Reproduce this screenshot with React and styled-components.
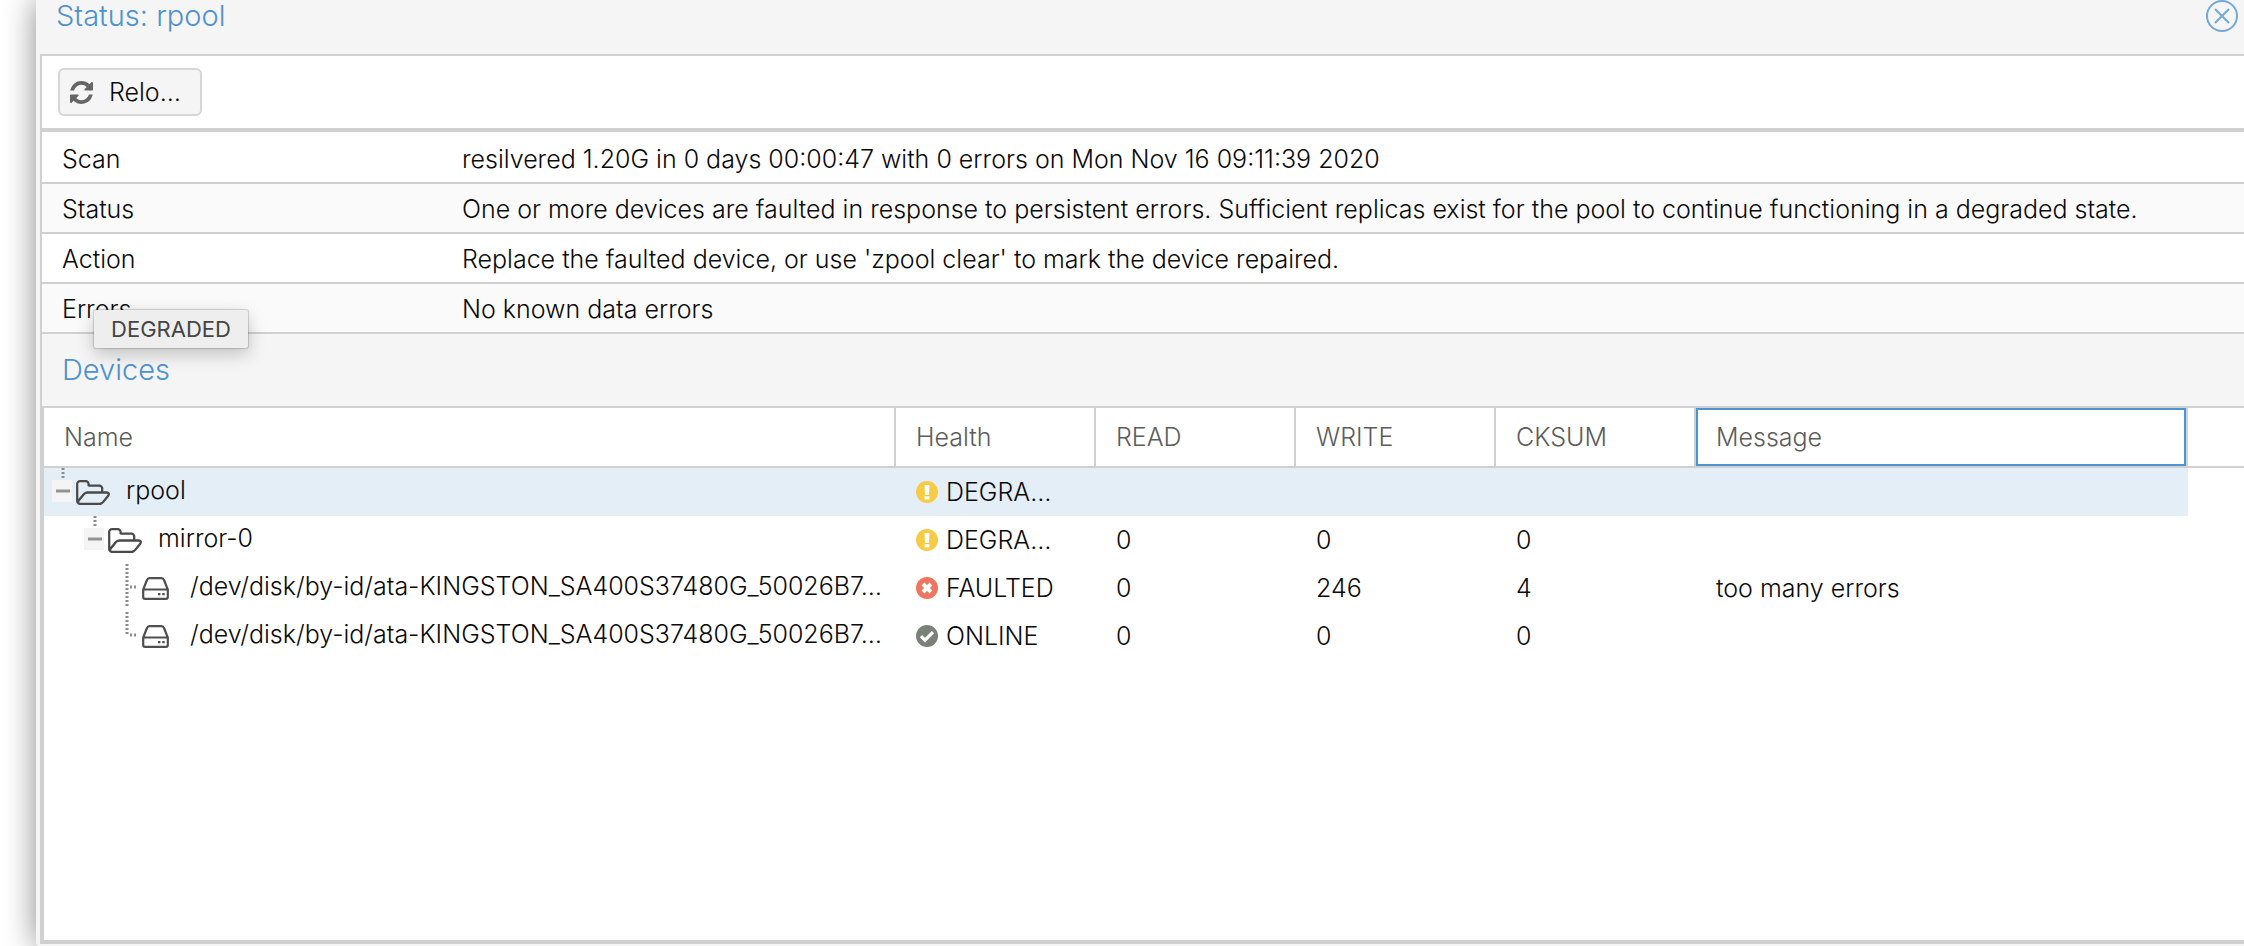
import React from "react";
import styled, { createGlobalStyle, css } from "styled-components";

const line = "#cfd0cf";
const accent = "#4f92d0";

const GlobalStyle = createGlobalStyle`
  * { box-sizing: border-box; }
  body {
    margin: 0;
    background: #fff;
    overflow: hidden;
    color: #0a0a0a;
    font: 300 25px/32px Inter, "Liberation Sans", sans-serif;
  }
  button { font: inherit; color: inherit; }
`;

const Page = styled.div`
  display: flex;
  height: 100vh;
  padding-left: 36px;
`;

const Window = styled.section`
  position: relative;
  flex: 1;
  min-width: 0;
  display: flex;
  flex-direction: column;
  padding: 0 0 2px 4px;
  background: #f5f5f5;
  border-bottom-left-radius: 4px;
  box-shadow: 0 0 32px #888;
`;

const WindowHeader = styled.header`
  display: flex;
  align-items: flex-start;
  justify-content: space-between;
  height: 54px;
  padding: 0 6px 0 16px;
`;

const Title = styled.h1`
  margin: 0;
  font-size: 29px;
  font-weight: 300;
  line-height: 32px;
  color: ${accent};
`;

const CloseButton = styled.button`
  display: flex;
  padding: 0;
  border: 0;
  background: none;
`;

const Body = styled.div`
  flex: 1;
  display: flex;
  flex-direction: column;
  border-top: 2px solid ${line};
`;

const Toolbar = styled.div`
  display: flex;
  align-items: center;
  height: 76px;
  padding-left: 16px;
  background: #fff;
  border-left: 2px solid ${line};
  border-bottom: 4px solid ${line};
`;

const ToolButton = styled.button`
  display: flex;
  align-items: center;
  gap: 16px;
  width: 144px;
  height: 48px;
  padding: 0 10px;
  border: 2px solid #d6d6d6;
  border-radius: 6px;
  background: #f5f5f5;
`;

const InfoList = styled.dl`
  margin: 0;
  padding-top: 2px;
  background: #fff;
  border-left: 2px solid ${line};
`;

const InfoRow = styled.div`
  display: flex;
  align-items: center;
  height: 50px;
  padding: 2px 0 0 20px;
  border-bottom: 2px solid ${line};
  &:nth-child(even) { background: #fafafa; }
`;

const InfoLabel = styled.dt`
  width: 400px;
`;

const InfoValue = styled.dd`
  margin: 0;
  white-space: nowrap;
`;

const SectionHeader = styled.div`
  display: flex;
  align-items: center;
  height: 72px;
  padding-left: 20px;
  border-left: 2px solid ${line};
`;

const SectionTitle = styled(Title).attrs({ as: "h2" })``;

const GridPanel = styled.div`
  flex: 1;
  background: #fff;
  border: 4px solid ${line};
  border-top-width: 2px;
  border-right: 0;
`;

const Table = styled.table`
  width: 100%;
  table-layout: fixed;
  border-collapse: separate;
  border-spacing: 0;
`;

const Col = styled.col`
  width: ${(p) => p.$width};
`;

const HeadCell = styled.th`
  height: 60px;
  padding: 0 20px;
  text-align: left;
  font-weight: 300;
  color: #5c5c5c;
  border-bottom: 2px solid ${line};
  ${(p) => !p.$filler && css`border-right: 2px solid ${line};`}
  ${(p) => p.$focused && css`box-shadow: inset 0 0 0 2px ${accent};`}
`;

const Cell = styled.td`
  height: 48px;
  padding: 0 20px;
  white-space: nowrap;
  background: ${(p) => (p.$selected ? "#e4eef7" : "#fff")};
`;

const NameCell = styled(Cell)`
  padding: 0 0 0 ${(p) => 8 + p.$level * 32}px;
  overflow: hidden;
`;

const TreeNode = styled.div`
  display: flex;
  align-items: center;
  height: 48px;
`;

const Expander = styled.button`
  display: flex;
  padding: 0;
  border: 0;
  background: none;
`;

const NodeIcon = styled.span`
  display: flex;
  margin: 0 16px 0 4px;
`;

const NodeName = styled.span`
  padding-bottom: 4px;
`;

const HealthValue = styled.span`
  display: flex;
  align-items: center;
  gap: 8px;
`;

const Tooltip = styled.div`
  position: absolute;
  left: 58px;
  top: 310px;
  width: 154px;
  height: 38px;
  text-align: center;
  font-size: 22px;
  font-weight: 400;
  line-height: 38px;
  color: #444;
  background: #eee;
  border-radius: 2px;
  box-shadow: 0 0 1px 1px rgba(0, 0, 0, 0.16), 0 6px 18px rgba(0, 0, 0, 0.22);
`;

const CloseIcon = () => (
  <svg width="32" height="32" viewBox="0 0 32 32" fill="none" stroke="#74a7da" strokeWidth="2">
    <circle cx="16" cy="16" r="15" />
    <path d="M9 9l14 14M23 9L9 23" />
  </svg>
);

const RefreshIcon = () => (
  <svg width="23" height="23" viewBox="0 0 1536 1536" fill="#666">
    <path d="M1511 928q0 5-1 7-64 268-268 434.5t-478 166.5q-146 0-282.500-55t-243.500-157l-129 129q-19 19-45 19t-45-19-19-45v-448q0-26 19-45t45-19h448q26 0 45 19t19 45-19 45l-137 137q71 66 161 102t187 36q134 0 250-65t186-179q11-17 53-117 8-23 30-23h192q13 0 22.500 9.500t9.500 22.500zm25-800v448q0 26-19 45t-45 19h-448q-26 0-45-19t-19-45 19-45l138-138q-148-137-349-137-134 0-250 65t-186 179q-11 17-53 117-8 23-30 23h-199q-13 0-22.500-9.500t-9.500-22.500v-7q65-268 270-434.500t480-166.500q146 0 284 55.500t245 156.500l130-129q19-19 45-19t45 19 19 45z" />
  </svg>
);

const FolderIcon = () => (
  <svg width="34" height="25" viewBox="64 128 1909 1408" fill="#4a4a4a">
    <path d="M1845 931q0-35-53-35h-1088q-40 0-85.500 21.500t-71.500 52.500l-294 363q-18 24-18 40 0 35 53 35h1088q40 0 86-22t71-53l294-363q18-22 18-39zm-1141-163h768v-160q0-40-28-68t-68-28h-576q-40 0-68-28t-28-68v-64q0-40-28-68t-68-28h-320q-40 0-68 28t-28 68v853l256-315q44-53 116-87.500t140-34.500zm1269 163q0 62-46 120l-295 363q-43 53-116 87.500t-140 34.500h-1088q-92 0-158-66t-66-158v-960q0-92 66-158t158-66h320q92 0 158 66t66 158v32h544q92 0 158 66t66 158v160h192q54 0 99 24.500t67 70.500q15 32 15 68z" />
  </svg>
);

const DiskIcon = () => (
  <svg width="34" height="23" viewBox="-2 0 34 23" fill="none" stroke="#4f4f4f" strokeWidth="2.200">
    <path d="M1.200 12.500L5 3Q5.600 1.200 7.500 1.200H19.500Q21.400 1.200 22 3L25.800 12.500V20Q25.800 21.800 24 21.800H3Q1.200 21.800 1.200 20ZM1.200 12.500H25.800" />
    <path d="M16 17.200h2.400M20.300 17.200h2.400" />
  </svg>
);

const CollapseIcon = () => (
  <svg width="20" height="48" viewBox="0 0 20 48">
    <path d="M11 0V12" stroke="#8c8c8c" strokeWidth="3" strokeDasharray="2 2" />
    <rect y="12" width="20" height="22" fill="#f4f4f4" />
    <path d="M4 23H18" stroke="#939393" strokeWidth="3" />
  </svg>
);

const Elbow = ({ last }) => (
  <svg width="20" height="48" viewBox="0 0 20 48" stroke="#8c8c8c" strokeWidth="3" strokeDasharray="2 2">
    <path d={last ? "M11 0V24" : "M11 0V44"} />
    <path d="M14 23H20" />
  </svg>
);

const marks = {
  warning: { fill: "#f8cb45", mark: <path d="M8.500 4h5l-.5 10h-4zM8.500 15.300h5v3.200h-5z" fill="#fff" /> },
  error: { fill: "#f07561", mark: <path d="M7 7l8 8M15 7l-8 8" stroke="#fff" strokeWidth="4" /> },
  ok: { fill: "#7b8079", mark: <path d="M5 11.200l4 4 8-8" stroke="#fff" strokeWidth="3.200" fill="none" /> },
};

const HealthIcon = ({ kind }) => (
  <svg width="22" height="22" viewBox="0 0 22 22">
    <circle cx="11" cy="11" r="11" fill={marks[kind].fill} />
    {marks[kind].mark}
  </svg>
);

const info = [
  ["Scan", "resilvered 1.20G in 0 days 00:00:47 with 0 errors on Mon Nov 16 09:11:39 2020"],
  ["Status", "One or more devices are faulted in response to persistent errors. Sufficient replicas exist for the pool to continue functioning in a degraded state."],
  ["Action", "Replace the faulted device, or use 'zpool clear' to mark the device repaired."],
  ["Errors", "No known data errors"],
];

const disk = "/dev/disk/by-id/ata-KINGSTON_SA400S37480G_50026B7…";

const devices = [
  { level: 0, name: "rpool", kind: "warning", health: "DEGRA…", selected: true },
  { level: 1, name: "mirror-0", kind: "warning", health: "DEGRA…", read: 0, write: 0, cksum: 0 },
  { level: 2, leaf: true, name: disk, kind: "error", health: "FAULTED", read: 0, write: 246, cksum: 4, message: "too many errors" },
  { level: 2, leaf: true, last: true, name: disk, kind: "ok", health: "ONLINE", read: 0, write: 0, cksum: 0 },
];

function DeviceRow({ device: d }) {
  return (
    <tr>
      <NameCell $level={d.level} $selected={d.selected}>
        <TreeNode>
          {d.leaf ? (
            <Elbow last={d.last} />
          ) : (
            <Expander aria-label={`Collapse ${d.name}`}><CollapseIcon /></Expander>
          )}
          <NodeIcon>{d.leaf ? <DiskIcon /> : <FolderIcon />}</NodeIcon>
          <NodeName>{d.name}</NodeName>
        </TreeNode>
      </NameCell>
      <Cell $selected={d.selected}>
        <HealthValue><HealthIcon kind={d.kind} />{d.health}</HealthValue>
      </Cell>
      <Cell $selected={d.selected}>{d.read}</Cell>
      <Cell $selected={d.selected}>{d.write}</Cell>
      <Cell $selected={d.selected}>{d.cksum}</Cell>
      <Cell $selected={d.selected}>{d.message}</Cell>
      <Cell />
    </tr>
  );
}

export default function App() {
  return (
    <Page>
      <GlobalStyle />
      <Window>
        <WindowHeader>
          <Title>Status: rpool</Title>
          <CloseButton aria-label="Close"><CloseIcon /></CloseButton>
        </WindowHeader>
        <Body>
          <Toolbar>
            <ToolButton><RefreshIcon />Relo…</ToolButton>
          </Toolbar>
          <InfoList>
            {info.map(([label, value]) => (
              <InfoRow key={label}>
                <InfoLabel>{label}</InfoLabel>
                <InfoValue>{value}</InfoValue>
              </InfoRow>
            ))}
          </InfoList>
          <SectionHeader><SectionTitle>Devices</SectionTitle></SectionHeader>
          <GridPanel>
            <Table>
              <colgroup>
                <Col $width="852px" />
                <Col $width="200px" />
                <Col $width="200px" />
                <Col $width="200px" />
                <Col $width="200px" />
                <Col $width="auto" />
                <Col $width="56px" />
              </colgroup>
              <thead>
                <tr>
                  <HeadCell>Name</HeadCell>
                  <HeadCell>Health</HeadCell>
                  <HeadCell>READ</HeadCell>
                  <HeadCell>WRITE</HeadCell>
                  <HeadCell>CKSUM</HeadCell>
                  <HeadCell $focused>Message</HeadCell>
                  <HeadCell as="td" $filler />
                </tr>
              </thead>
              <tbody>
                {devices.map((d, i) => <DeviceRow key={i} device={d} />)}
              </tbody>
            </Table>
          </GridPanel>
        </Body>
        <Tooltip role="tooltip">DEGRADED</Tooltip>
      </Window>
    </Page>
  );
}
